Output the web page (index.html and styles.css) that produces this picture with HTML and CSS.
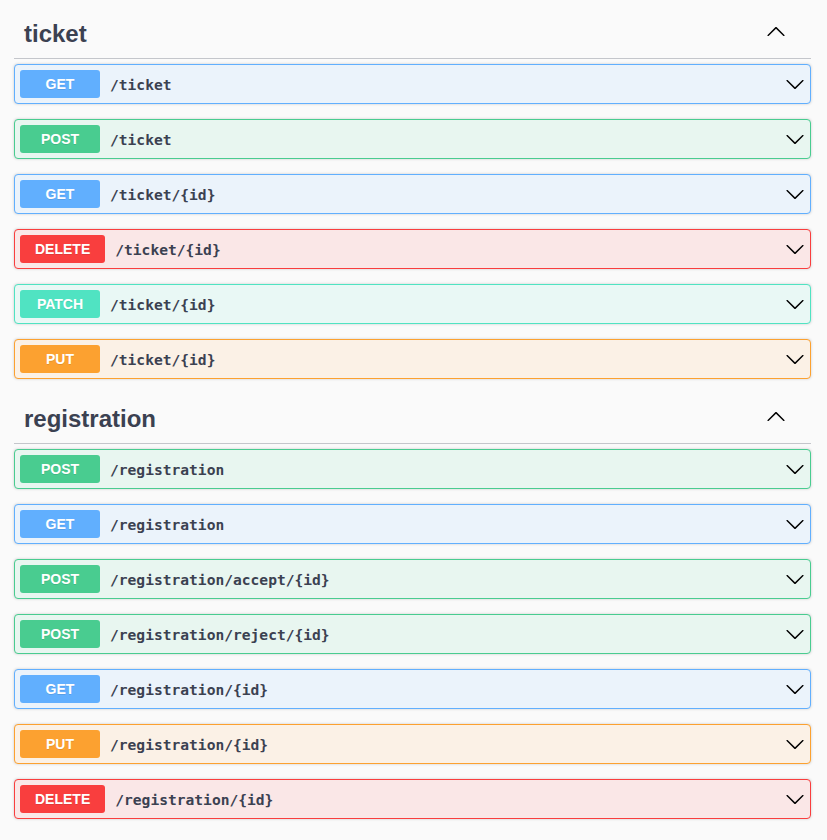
FILE: index.html
```html
<!DOCTYPE html>
<html>
<head>
<meta charset="utf-8">
<link rel="stylesheet" href="styles.css">
</head>
<body>
<div class="wrapper">
  <section class="tag-section">
    <h3 class="tag-header"><span class="tag-name">ticket</span>
      <span class="toggle"><svg width="20" height="20" viewBox="0 0 20 20"><path d="M17.418 14.908c.272.268.709.268.979 0s.271-.701 0-.969l-7.908-7.83c-.27-.268-.707-.268-.979 0l-7.908 7.83c-.27.268-.27.701 0 .969.271.268.709.268.979 0L10 7.767l7.418 7.141z"/></svg></span>
    </h3>
    <div class="op get"><span class="method">GET</span><span class="path">/ticket</span><svg class="arrow" width="20" height="20" viewBox="0 0 20 20"><path d="M17.418 6.109c.272-.268.709-.268.979 0s.271.701 0 .969l-7.908 7.83c-.27.268-.707.268-.979 0l-7.908-7.83c-.27-.268-.27-.701 0-.969.271-.268.709-.268.979 0L10 13.25l7.418-7.141z"/></svg></div>
    <div class="op post"><span class="method">POST</span><span class="path">/ticket</span><svg class="arrow" width="20" height="20" viewBox="0 0 20 20"><path d="M17.418 6.109c.272-.268.709-.268.979 0s.271.701 0 .969l-7.908 7.83c-.27.268-.707.268-.979 0l-7.908-7.83c-.27-.268-.27-.701 0-.969.271-.268.709-.268.979 0L10 13.25l7.418-7.141z"/></svg></div>
    <div class="op get"><span class="method">GET</span><span class="path">/ticket/{id}</span><svg class="arrow" width="20" height="20" viewBox="0 0 20 20"><path d="M17.418 6.109c.272-.268.709-.268.979 0s.271.701 0 .969l-7.908 7.83c-.27.268-.707.268-.979 0l-7.908-7.83c-.27-.268-.27-.701 0-.969.271-.268.709-.268.979 0L10 13.25l7.418-7.141z"/></svg></div>
    <div class="op delete"><span class="method">DELETE</span><span class="path">/ticket/{id}</span><svg class="arrow" width="20" height="20" viewBox="0 0 20 20"><path d="M17.418 6.109c.272-.268.709-.268.979 0s.271.701 0 .969l-7.908 7.83c-.27.268-.707.268-.979 0l-7.908-7.83c-.27-.268-.27-.701 0-.969.271-.268.709-.268.979 0L10 13.25l7.418-7.141z"/></svg></div>
    <div class="op patch"><span class="method">PATCH</span><span class="path">/ticket/{id}</span><svg class="arrow" width="20" height="20" viewBox="0 0 20 20"><path d="M17.418 6.109c.272-.268.709-.268.979 0s.271.701 0 .969l-7.908 7.83c-.27.268-.707.268-.979 0l-7.908-7.83c-.27-.268-.27-.701 0-.969.271-.268.709-.268.979 0L10 13.25l7.418-7.141z"/></svg></div>
    <div class="op put"><span class="method">PUT</span><span class="path">/ticket/{id}</span><svg class="arrow" width="20" height="20" viewBox="0 0 20 20"><path d="M17.418 6.109c.272-.268.709-.268.979 0s.271.701 0 .969l-7.908 7.83c-.27.268-.707.268-.979 0l-7.908-7.83c-.27-.268-.27-.701 0-.969.271-.268.709-.268.979 0L10 13.25l7.418-7.141z"/></svg></div>
  </section>
  <section class="tag-section">
    <h3 class="tag-header"><span class="tag-name">registration</span>
      <span class="toggle"><svg width="20" height="20" viewBox="0 0 20 20"><path d="M17.418 14.908c.272.268.709.268.979 0s.271-.701 0-.969l-7.908-7.83c-.27-.268-.707-.268-.979 0l-7.908 7.83c-.27.268-.27.701 0 .969.271.268.709.268.979 0L10 7.767l7.418 7.141z"/></svg></span>
    </h3>
    <div class="op post"><span class="method">POST</span><span class="path">/registration</span><svg class="arrow" width="20" height="20" viewBox="0 0 20 20"><path d="M17.418 6.109c.272-.268.709-.268.979 0s.271.701 0 .969l-7.908 7.83c-.27.268-.707.268-.979 0l-7.908-7.83c-.27-.268-.27-.701 0-.969.271-.268.709-.268.979 0L10 13.25l7.418-7.141z"/></svg></div>
    <div class="op get"><span class="method">GET</span><span class="path">/registration</span><svg class="arrow" width="20" height="20" viewBox="0 0 20 20"><path d="M17.418 6.109c.272-.268.709-.268.979 0s.271.701 0 .969l-7.908 7.83c-.27.268-.707.268-.979 0l-7.908-7.830c-.27-.268-.27-.701 0-.969.271-.268.709-.268.979 0L10 13.25l7.418-7.141z"/></svg></div>
    <div class="op post"><span class="method">POST</span><span class="path">/registration/accept/{id}</span><svg class="arrow" width="20" height="20" viewBox="0 0 20 20"><path d="M17.418 6.109c.272-.268.709-.268.979 0s.271.701 0 .969l-7.908 7.83c-.27.268-.707.268-.979 0l-7.908-7.83c-.27-.268-.27-.701 0-.969.271-.268.709-.268.979 0L10 13.25l7.418-7.141z"/></svg></div>
    <div class="op post"><span class="method">POST</span><span class="path">/registration/reject/{id}</span><svg class="arrow" width="20" height="20" viewBox="0 0 20 20"><path d="M17.418 6.109c.272-.268.709-.268.979 0s.271.701 0 .969l-7.908 7.83c-.27.268-.707.268-.979 0l-7.908-7.83c-.27-.268-.27-.701 0-.969.271-.268.709-.268.979 0L10 13.25l7.418-7.141z"/></svg></div>
    <div class="op get"><span class="method">GET</span><span class="path">/registration/{id}</span><svg class="arrow" width="20" height="20" viewBox="0 0 20 20"><path d="M17.418 6.109c.272-.268.709-.268.979 0s.271.701 0 .969l-7.908 7.83c-.27.268-.707.268-.979 0l-7.908-7.83c-.27-.268-.27-.701 0-.969.271-.268.709-.268.979 0L10 13.25l7.418-7.141z"/></svg></div>
    <div class="op put"><span class="method">PUT</span><span class="path">/registration/{id}</span><svg class="arrow" width="20" height="20" viewBox="0 0 20 20"><path d="M17.418 6.109c.272-.268.709-.268.979 0s.271.701 0 .969l-7.908 7.83c-.27.268-.707.268-.979 0l-7.908-7.83c-.27-.268-.27-.701 0-.969.271-.268.709-.268.979 0L10 13.25l7.418-7.141z"/></svg></div>
    <div class="op delete"><span class="method">DELETE</span><span class="path">/registration/{id}</span><svg class="arrow" width="20" height="20" viewBox="0 0 20 20"><path d="M17.418 6.109c.272-.268.709-.268.979 0s.271.701 0 .969l-7.908 7.83c-.27.268-.707.268-.979 0l-7.908-7.83c-.27-.268-.27-.701 0-.969.271-.268.709-.268.979 0L10 13.25l7.418-7.141z"/></svg></div>
  </section>
</div>
</body>
</html>
```
FILE: styles.css
```css
html, body {
  margin: 0;
  padding: 0;
  background: #fafafa;
  font-family: "Liberation Sans", Arial, sans-serif;
  color: #3b4151;
}
.wrapper {
  padding: 9px 16px 0 14px;
}
.tag-header {
  margin: 0 0 5px;
  height: 49px;
  display: flex;
  align-items: center;
  padding: 0 0 0 10px;
  border-bottom: 1px solid #c4c6cb;
  font-size: 24px;
  font-weight: bold;
}
.tag-name {
  flex: 1;
}
.toggle {
  display: flex;
  padding: 0 25px 5px 0;
}
.toggle svg, .arrow {
  fill: #000;
}
.op {
  display: flex;
  align-items: center;
  padding: 5px;
  margin: 0 0 15px;
  border: 1px solid;
  border-radius: 4px;
  box-shadow: 0 0 3px rgba(0, 0, 0, .19);
}
.method {
  min-width: 80px;
  box-sizing: border-box;
  padding: 6px 15px;
  border-radius: 3px;
  color: #fff;
  font-size: 14px;
  line-height: 16px;
  font-weight: bold;
  text-align: center;
  text-shadow: 0 1px 0 rgba(0, 0, 0, .1);
}
.path {
  flex: 1;
  padding: 0 10px;
  font-family: "DejaVu Sans Mono", monospace;
  font-weight: bold;
  font-size: 14.6px;
  color: #3b4151;
}
.arrow {
  flex: none;
}
.get { background: #ebf3fb; border-color: #61affe; }
.get .method { background: #61affe; }
.post { background: #e8f6f0; border-color: #49cc90; }
.post .method { background: #49cc90; }
.delete { background: #fae7e7; border-color: #f93e3e; }
.delete .method { background: #f93e3e; }
.patch { background: #e9f8f5; border-color: #50e3c2; }
.patch .method { background: #50e3c2; }
.put { background: #fbf1e6; border-color: #fca130; }
.put .method { background: #fca130; }
```
